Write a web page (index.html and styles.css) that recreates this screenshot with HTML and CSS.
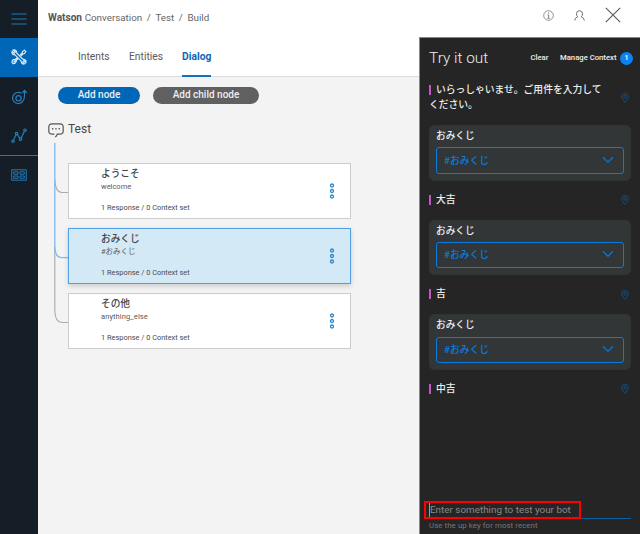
FILE: index.html
```
<!DOCTYPE html>
<html lang="ja">
<head>
<meta charset="utf-8">
<title>Watson Conversation</title>
<link rel="stylesheet" href="styles.css">
</head>
<body>
<svg class="defs" width="0" height="0">
  <symbol id="dots" viewBox="0 0 6 16"><g fill="none" stroke="#2d86c9" stroke-width="1.3"><circle cx="3" cy="2.5" r="1.5"/><circle cx="3" cy="8" r="1.5"/><circle cx="3" cy="13.5" r="1.5"/></g></symbol>
  <symbol id="pin" viewBox="0 0 8 10"><g fill="none" stroke="#11548c" stroke-width=".9"><path d="M4 9.4C3 7.8.6 5.8.6 3.8A3.4 3.3 0 0 1 7.4 3.8C7.4 5.8 5 7.8 4 9.4Z"/><circle cx="4" cy="3.8" r="1.3"/></g></symbol>
  <symbol id="chevron" viewBox="0 0 12 8"><path d="M1 1.2L6 6.2L11 1.2" fill="none" stroke="#0872ca" stroke-width="1.6"/></symbol>
</svg>
<div class="app">
  <nav class="rail">
    <div class="rail-item menu"><svg width="16" height="14" viewBox="0 0 16 14"><path d="M.5 2H15.5M.5 7H15.5M.5 12H15.5" stroke="#2379b8" stroke-width="1.1"/></svg></div>
    <div class="rail-item active"><svg width="16" height="16" viewBox="0 0 16 16" fill="none" stroke="#d4e9f8" stroke-width="1.2"><path d="M2.2 1L4.3 3.1L3.2 4.3L1.2 2.3C.4 4.2 1.6 5.9 3.7 5.7L10.2 12.2C10 14.3 11.7 15.6 13.7 14.8L11.7 12.9L12.8 11.7L14.8 13.7C15.6 11.8 14 10.2 12 10.4L5.7 4C6 2 4.2.2 2.2 1Z"/><path d="M9 6.2L11.2 4L11.5 2.5L13.5 1.2L14.8 2.5L13.5 4.5L12 4.8L9.8 7M7.4 9.4L5.4 11.3C5.5 13.2 3.8 15 2.1 14.6L.9 13.3C1.1 11.4 2.6 10.2 4.5 10.4L6.5 8.5M2.5 13.5L5 11"/></svg></div>
    <div class="rail-item"><svg width="16" height="16" viewBox="0 0 16 16" fill="none" stroke="#287eb9" stroke-width="1.2"><path d="M10.4 4.4A5.6 5.6 0 1 0 11.8 12.2Q13.5 10.5 13.5 6.5V1.5M11.3 3.8L13.5 1.4L15.6 3.8"/><circle cx="7.5" cy="9.2" r="2.6"/></svg></div>
    <div class="rail-item chart"><svg width="16" height="16" viewBox="0 0 16 16" fill="none" stroke="#287eb9" stroke-width="1.2"><path d="M2.4 12.1L5.1 6.7M6.4 6.6L9 10.4M10.1 10.2L13.5 3"/><circle cx="2" cy="13.3" r="1.2"/><circle cx="5.6" cy="5.5" r="1.2"/><circle cx="9.6" cy="11.2" r="1.2"/><circle cx="14" cy="2.2" r="1.2"/></svg></div>
    <div class="rail-item last"><svg width="16" height="12" viewBox="0 0 16 12" fill="none" stroke="#2379b8" stroke-width="1"><path d="M.7 .8H15.3V11.2H.7ZM2.7 2.8H7V5.2H2.7ZM9 2.8H13.3V5.2H9ZM2.7 7H7V9.3H2.7ZM9 7H13.3V9.3H9Z"/></svg></div>
  </nav>
  <div class="content">
    <header class="topbar">
      <div class="crumbs"><b>Watson</b><span class="conv">Conversation</span><span>/</span><span>Test</span><span>/</span><span>Build</span></div>
      <div class="tools">
        <svg width="11" height="11" viewBox="0 0 11 11" fill="none" stroke="#777"><circle cx="5.5" cy="5.5" r="4.8" stroke-width=".8"/><path d="M5.5 2.4V3.6M4.5 4.9H5.6V8.2M4.4 8.3H6.8" stroke-width=".9"/></svg>
        <svg class="user" width="11" height="11" viewBox="0 0 11 11" fill="none" stroke="#666" stroke-width=".95"><path d="M.7 10.5Q.9 7.6 3.8 6.8Q2.5 5.8 2.5 3.8Q2.6.8 5.5.7Q8.4.8 8.5 3.8Q8.5 5.8 7.2 6.8Q10.1 7.6 10.3 10.5"/></svg>
        <svg class="close" width="16" height="16" viewBox="0 0 16 16"><path d="M.8.8L15.2 15.2M15.2.8L.8 15.2" stroke="#555" stroke-width="1.05"/></svg>
      </div>
    </header>
    <div class="split">
      <main class="workspace">
        <div class="tabs"><span class="t1">Intents</span><span class="t2">Entities</span><span class="tab-on">Dialog</span></div>
        <div class="buttons"><button class="btn add">Add node</button><button class="btn child">Add child node</button></div>
        <div class="root"><svg width="16" height="15" viewBox="0 0 16 15" fill="none" stroke="#555" stroke-width="1.2"><path d="M8.8 11.2H11.8Q15.2 11.2 15.2 8V4Q15.2.8 11.8.8H4.2Q.8.8.8 4V8Q.8 11.2 4.2 11.2H6.4M9 11.2Q9 13 7.2 13.9"/><path d="M4 5.8H5.3M7.3 5.8H8.6M10.6 5.8H11.9" stroke-width="1.4"/></svg><span>Test</span></div>
        <div class="tree">
          <svg class="lines" width="15" height="182" viewBox="0 0 15 182" fill="none" stroke-width="1.1"><path d="M.8 37Q1.5 49.5 8 49.5H15M.8 104V168Q1.2 179.5 8 179.5H15" stroke="#aaa"/><path d="M.8 0V104Q1.2 114.7 8 114.7H15" stroke="#7db9f3" stroke-width="1.3"/></svg>
          <div class="nodes">
            <section class="node"><div><h3>ようこそ</h3><p class="cond">welcome</p><p class="meta">1 Response / 0 Context set</p></div><svg width="6" height="16"><use href="#dots"/></svg></section>
            <section class="node selected"><div><h3>おみくじ</h3><p class="cond">#おみくじ</p><p class="meta">1 Response / 0 Context set</p></div><svg width="6" height="16"><use href="#dots"/></svg></section>
            <section class="node"><div><h3>その他</h3><p class="cond any">anything_else</p><p class="meta">1 Response / 0 Context set</p></div><svg width="6" height="16"><use href="#dots"/></svg></section>
          </div>
        </div>
      </main>
      <aside class="panel">
        <div class="panel-head"><h2>Try it out</h2><span class="clear">Clear</span><span class="manage">Manage Context</span><span class="count">1</span></div>
        <div class="bot first"><p><i></i>いらっしゃいませ。ご用件を入力してください。</p><svg width="8" height="10"><use href="#pin"/></svg></div>
        <div class="card"><h4>おみくじ</h4><div class="select"><span>#おみくじ</span><svg width="12" height="8"><use href="#chevron"/></svg></div></div>
        <div class="bot"><p><i></i>大吉</p><svg width="8" height="10"><use href="#pin"/></svg></div>
        <div class="card"><h4>おみくじ</h4><div class="select"><span>#おみくじ</span><svg width="12" height="8"><use href="#chevron"/></svg></div></div>
        <div class="bot"><p><i></i>吉</p><svg width="8" height="10"><use href="#pin"/></svg></div>
        <div class="card"><h4>おみくじ</h4><div class="select"><span>#おみくじ</span><svg width="12" height="8"><use href="#chevron"/></svg></div></div>
        <div class="bot"><p><i></i>中吉</p><svg width="8" height="10"><use href="#pin"/></svg></div>
        <div class="entry"><div class="field"><span>Enter something to test your bot</span><div class="highlight"></div></div><p>Use the up key for most recent</p></div>
      </aside>
    </div>
  </div>
</div>
</body>
</html>
```
FILE: styles.css
```
* { box-sizing: border-box; }
body, h2, h3, h4, p { margin: 0; }
body { font-family: Roboto, "Noto Sans CJK JP", sans-serif; color: #5a5a5a; font-size: 11px; overflow: hidden; }
svg { display: block; flex: none; }
.defs { position: absolute; }
.app { display: flex; width: 640px; height: 534px; background: #f3f3f3; }
.rail { width: 38px; background: #151e27; flex: none; }
.rail-item { height: 39.5px; display: flex; align-items: center; justify-content: center; }
.rail-item.menu { height: 37.5px; }
.rail-item.active { background: #0067b8; }
.rail-item.chart { border-bottom: 1px solid #2379b8; }
.rail-item.last { height: 37.5px; }
.content { flex: 1; min-width: 0; display: flex; flex-direction: column; }
.topbar { height: 37px; background: #fff; display: flex; justify-content: space-between; padding: 0 19px 0 10px; flex: none; }
.crumbs { display: flex; gap: 4.6px; line-height: 35px; font-size: 10.1px; color: #666; white-space: nowrap; }
.crumbs b { color: #555; margin-right: -2px; }
.crumbs .conv { font-size: 9.8px; }
.crumbs .conv ~ span { font-size: 9.8px; }
.tools { display: flex; align-items: center; height: 30px; }
.user { margin-left: 20px; }
.close { margin-left: 20px; }
.split { flex: 1; display: flex; min-height: 0; }
.workspace { width: 381px; flex: none; }
.tabs { height: 40px; background: #fff; border-bottom: 1px solid #dcdcdc; display: flex; padding-left: 40px; line-height: 40px; font-size: 10.3px; }
.tabs span { height: 40px; }
.t1 { width: 51px; }
.t2 { width: 53px; }
.tab-on { width: 29px; color: #1065b5; font-weight: 700; border-bottom: 2px solid #1470bd; }
.buttons { display: flex; gap: 13px; padding: 9.5px 0 0 20px; }
.btn { border: 0; border-radius: 9px; height: 17px; padding: 0 0 1px; font: 500 10px/15px Roboto, sans-serif; color: #eee; }
.add { width: 82px; background: #0067b8; }
.child { width: 106px; background: #606060; }
.root { display: flex; padding: 17px 0 0 10px; height: 39px; gap: 4px; font-size: 12px; line-height: 17px; color: #484848; }
.root svg { margin-top: 2px; }
.tree { display: flex; padding-left: 16px; }
.nodes { padding-top: 20px; margin-left: -1px; display: flex; flex-direction: column; gap: 9px; }
.node { width: 283px; height: 56px; background: #fff; border: 1px solid #ccc; display: flex; justify-content: space-between; align-items: center; padding: 0 15px 0 32px; }
.node > div { height: 54px; }
.node.selected { background: #d4e9f6; border-color: #539fe4; box-shadow: 0 2px 5px rgba(0,0,0,.17); }
.node h3 { margin-top: 2px; font: 500 9.7px/15px "Noto Sans CJK JP", sans-serif; color: #444; }
.cond { font-size: 7.5px; line-height: 10px; margin-top: 1px; }
.any { letter-spacing: .1px; }
.meta { font-size: 7.4px; line-height: 10px; margin-top: 11px; color: #4b4b4b; white-space: nowrap; }
.panel { flex: 1; background: #252525; border-left: 1px solid #888; border-top: 1px solid #888; padding: 0 9px; display: flex; flex-direction: column; min-width: 0; }
.panel-head { display: flex; align-items: center; height: 40px; margin-right: -4px; color: #eee; white-space: nowrap; flex: none; }
.panel-head h2 { font-size: 15.4px; font-weight: 300; width: 101.5px; margin-top: -1px; }
.clear { width: 29.5px; font-size: 7.7px; font-weight: 500; margin-top: -1px; }
.manage { width: 60px; font-size: 7.7px; font-weight: 500; margin-top: -1px; }
.count { width: 13px; height: 13px; border-radius: 50%; background: #0d83f2; font-size: 7px; line-height: 13px; text-align: center; font-weight: 700; flex: none; }
.bot { display: flex; justify-content: space-between; align-items: center; height: 39.2px; flex: none; padding-right: 2px; font: 500 9.77px/14.7px "Noto Sans CJK JP", sans-serif; color: #eee; }
.bot p { width: 176px; margin-top: -2px; }
.bot i { display: inline-block; width: 2px; height: 10px; background: #bd59c5; margin-right: 5px; vertical-align: -2px; }
.bot.first { height: 47px; padding-bottom: 7px; }
.card { background: #323637; height: 55.5px; flex: none; border-radius: 5px; padding: 2px 6px 6px; color: #eee; border: 1px solid #303435; }
.card h4 { font: 500 9.7px/15px "Noto Sans CJK JP", sans-serif; }
.select { height: 26.5px; margin-top: 4.3px; border: 1px solid #087be0; border-radius: 3px; display: flex; justify-content: space-between; align-items: center; padding: 0 9px 2px 7px; color: #087be0; font-size: 9.8px; font-weight: 500; }
.entry { margin-top: auto; height: 33px; font-size: 7.9px; color: #777; }
.field { position: relative; height: 18px; border-bottom: 1px solid #0a5fa5; border-left: 1px solid #999; font-size: 9.9px; line-height: 18px; color: #8a8a8a; white-space: nowrap; }
.highlight { position: absolute; left: -6px; top: 0; width: 157px; height: 18px; border: 3px solid #f00; border-width: 2.5px; }
.entry p { line-height: 14px; letter-spacing: .06px; }
```
